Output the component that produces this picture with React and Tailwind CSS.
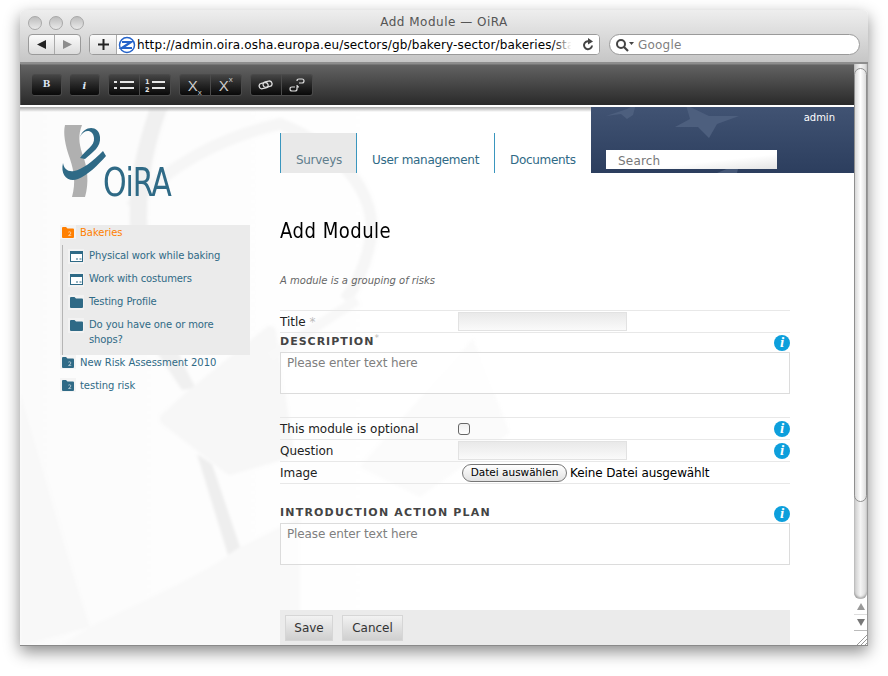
import React from 'react';

const FONT = { ui: 'font-["DejaVu_Sans",sans-serif]' };

function Light() {
  return <span className="block w-[14px] h-[14px] rounded-full border border-[#a8a8a8] bg-gradient-to-b from-[#bdbdbd] to-[#e9e9e9]" />;
}

function ToolButton({ children, left, right }) {
  const round = `${left ? 'rounded-l-[3px]' : ''} ${right ? 'rounded-r-[3px] border-l-0' : ''}`;
  return (
    <span className={`flex items-center justify-center h-[22px] border border-[#4a4a4a] bg-gradient-to-b from-[#454545] to-[#090909] text-white ${round}`}>
      {children}
    </span>
  );
}

function Folder({ color = '#2f6a86' }) {
  return (
    <span className="flex items-center justify-center w-[16px] h-[14px] shrink-0 bg-[#f4f4f4]">
      <svg width="12" height="11" viewBox="0 0 12 11">
        <path d="M0 1Q0 0 1 0H4L5.500 1.500H11Q12 1.500 12 2.500V10Q12 11 11 11H1Q0 11 0 10Z" fill={color} />
        <text x="6" y="9" fontSize="6" fill="#fff" opacity="0.8" fontFamily="DejaVu Sans">2</text>
      </svg>
    </span>
  );
}

function WindowIcon() {
  return (
    <svg width="13" height="11" viewBox="0 0 13 11" className="shrink-0">
      <rect x=".5" y=".5" width="12" height="10" fill="#fff" stroke="#2f6a86" />
      <rect x="0" y="0" width="13" height="3" fill="#2f6a86" />
      <path d="M6 8h2M9.500 8h2" stroke="#2f6a86" />
    </svg>
  );
}

function FullFolder() {
  return (
    <svg width="13" height="11" viewBox="0 0 13 11" className="shrink-0">
      <path d="M0 1Q0 0 1 0H4.500L6 1.500H12Q13 1.500 13 2.500V10Q13 11 12 11H1Q0 11 0 10Z" fill="#2f6a86" />
    </svg>
  );
}

function Info() {
  return (
    <span className="flex items-center justify-center w-4 h-4 rounded-full bg-[#0d9fdc] text-white font-['Liberation_Serif',serif] italic font-bold text-[15px] leading-none">
      i
    </span>
  );
}

function FieldRow({ label, children, info, star }) {
  return (
    <div className="flex items-center h-[22px] border-b border-[#e8e8e8]">
      <span className="w-[178px] text-[12px] text-[#222] tracking-[-0.03px]">
        {label}
        {star && <span className="text-[#bbb] ml-[4px]">*</span>}
      </span>
      <div className="flex-1 flex items-center">{children}</div>
      {info && <Info />}
    </div>
  );
}

function TextInput() {
  return <span className="block w-[169px] h-[19px] border border-[#e2e2e2] bg-gradient-to-b from-[#e9e9e9] to-[#fafafa]" />;
}

function TextBox() {
  return (
    <div className="h-[42px] border border-[#dcdcdc] bg-white/70 pl-[6px] pt-[1px] text-[12px] text-[#808080] tracking-[-0.12px]">
      Please enter text here
    </div>
  );
}

function SideItem({ icon, children }) {
  return (
    <div className="flex gap-[5px] text-[10px] leading-[15px] tracking-[-0.12px] text-[#2f6a86]">
      <span className="flex justify-center items-center w-[16px] h-[15px] mt-[1px] shrink-0 bg-[#f2f2f2]">{icon}</span>
      <span>{children}</span>
    </div>
  );
}

function Watermark() {
  return (
    <svg className="absolute inset-0 pointer-events-none blur-[1.5px]" width="834" height="539" viewBox="0 0 834 539">
      <defs>
        <linearGradient id="wash" x1="0" x2="1" y1="0" y2="0">
          <stop offset="0" stopColor="#fbfbfb" />
          <stop offset="1" stopColor="#ffffff" />
        </linearGradient>
      </defs>
      <rect width="420" height="539" fill="url(#wash)" />
      <path d="M0 285C25 370 50 460 70 520L0 539Z" fill="#f8f8f8" />
      <path d="M70 520C130 490 180 470 220 440L280 410V539H40Z" fill="#f9f9f9" />
      <path d="M110 100C147 60 200 30 260 17C320 40 360 90 350 135C345 160 335 180 325 193" fill="none" stroke="#f6f6f6" strokeWidth="12" />
      <path d="M130 0C115 45 108 80 110 120C112 175 125 225 140 250L162 283L176 281C150 235 127 170 127 110C127 70 135 35 148 0Z" fill="#f0f0f0" />
      <path d="M177 347L208 448L220 440L192 357Z" fill="#eeeeee" />
      <path d="M146 312L170 290L250 225L268 345L210 362Z" fill="#f7f7f7" stroke="#f7f7f7" strokeWidth="12" strokeLinejoin="round" />
      <path d="M453 231L490 326L400 390L340 360Z" fill="#fbfbfb" />
      <path d="M337 193L250 250" stroke="#f8f8f8" strokeWidth="10" />
    </svg>
  );
}

function Logo() {
  return (
    <div className="relative w-[115px] h-[78px]">
      <svg width="115" height="78" viewBox="0 0 115 78" className="absolute left-0 top-0">
        <path d="M5 2L22 2C18 12 19 20 22 30C28 45 29 60 25 74L12 74C16 60 14 48 10 36C5 22 3 10 5 2Z" fill="#b0b0b0" />
        <path d="M3 40C0 52 8 60 18 56C28 52 38 42 46 33L43 28C33 38 22 47 14 48C8 49 4 46 3 40Z" fill="#2f6a86" />
        <path d="M20 14C24 6 33 6 34 15C35 23 25 27 20 35L25 36C33 29 41 24 40 14C39 2 24 2 20 14Z" fill="#2f6a86" />
      </svg>
      <span className="absolute left-[43px] top-[40px] origin-left scale-x-[0.77] text-[39px] leading-[39px] text-[#2f6a86] tracking-[-1.5px]">OiRA</span>
    </div>
  );
}

export default function App() {
  return (
    <div className={`w-[888px] h-[676px] bg-white overflow-hidden pt-[10px] pl-[20px] ${FONT.ui}`}>
      <div className="w-[848px] h-[636px] flex flex-col rounded-t-[5px] bg-white shadow-[0_6px_16px_rgba(0,0,0,0.45)] border-b border-[#8a8a8a]">
        {/* browser chrome */}
        <div className="h-[54px] shrink-0 rounded-t-[5px] bg-gradient-to-b from-[#eeeeee] to-[#c6c6c6] border-b-2 border-[#8e8e8e]">
          <div className="relative h-[24px] flex items-center gap-[7px] pl-[8px] pt-[1px]">
            <Light />
            <Light />
            <Light />
            <span className="absolute inset-x-0 top-[3px] text-center text-[12px] text-[#555] tracking-[0.5px]">Add Module — OiRA</span>
          </div>
          <div className="flex items-center h-[21px] pl-[8px]">
            <div className="flex w-[53px] h-[21px] border border-[#9a9a9a] rounded-[4px] bg-gradient-to-b from-[#fbfbfb] to-[#dcdcdc]">
              <span className="flex-1 flex items-center justify-center border-r border-[#aaa]">
                <svg width="9" height="9" viewBox="0 0 9 9"><path d="M0 4.500L9 0V9Z" fill="#222" /></svg>
              </span>
              <span className="flex-1 flex items-center justify-center">
                <svg width="9" height="9" viewBox="0 0 9 9"><path d="M9 4.500L0 0V9Z" fill="#8d8d8d" /></svg>
              </span>
            </div>
            <div className="flex w-[511px] h-[21px] ml-[8px] border border-[#9a9a9a] rounded-[4px] overflow-hidden bg-white">
              <span className="flex items-center justify-center w-[27px] border-r border-[#aaa] bg-gradient-to-b from-[#fbfbfb] to-[#dcdcdc]">
                <svg width="11" height="11" viewBox="0 0 11 11"><path d="M5.500 0V11M0 5.500H11" stroke="#222" strokeWidth="2" /></svg>
              </span>
              <svg width="18" height="18" viewBox="0 0 18 18" className="ml-[1px] mt-[1px] shrink-0">
                <circle cx="9" cy="9" r="7.500" fill="#fff" stroke="#2563c9" strokeWidth="1.500" />
                <path d="M4 6H13L4 12H14" fill="none" stroke="#2563c9" strokeWidth="2.200" />
              </svg>
              <span className="relative flex-1 flex items-center overflow-hidden whitespace-nowrap text-[12px] text-black tracking-[0.13px] pl-[1px]">
                http://admin.oira.osha.europa.eu/sectors/gb/bakery-sector/bakeries/start
                <span className="absolute right-0 top-0 bottom-0 w-[46px] bg-gradient-to-r from-transparent to-white to-40%" />
                <svg width="14" height="14" viewBox="0 0 14 14" className="absolute right-[4px] top-[3px]">
                  <path d="M11 7.500A4 4 0 1 1 8 3.300" fill="none" stroke="#444" strokeWidth="2" />
                  <path d="M7 0L12 3.500L7 6.500Z" fill="#444" />
                </svg>
              </span>
            </div>
            <div className="flex items-center w-[251px] h-[21px] ml-[9px] border border-[#9a9a9a] rounded-full bg-white pl-[5px] text-[12px] text-[#808080]">
              <svg width="20" height="14" viewBox="0 0 20 14" className="shrink-0">
                <circle cx="6" cy="6" r="4" fill="none" stroke="#444" strokeWidth="2" />
                <path d="M9 9L13 13" stroke="#444" strokeWidth="2.200" />
                <path d="M14 4H19L16.500 7Z" fill="#444" />
              </svg>
              <span className="ml-[3px] pt-[1px] tracking-[0.2px]">Google</span>
            </div>
          </div>
        </div>

        <div className="flex flex-1 min-h-0">
          <div className="w-[834px] flex flex-col min-h-0">
            {/* editor toolbar */}
            <div className="h-[41px] shrink-0 flex items-center gap-[8px] pl-[11px] bg-gradient-to-b from-[#636363] to-[#2a2a2a] border-t border-[#777] border-l border-l-[#555]">
              <span className="w-[30px]"><ToolButton left right><b className="text-[9px] font-['DejaVu_Serif',serif] text-[#dde6f5]">B</b></ToolButton></span>
              <span className="w-[30px]"><ToolButton left right><i className="text-[10px] font-bold font-['DejaVu_Serif',serif] text-[#dde6f5]">i</i></ToolButton></span>
              <span className="grid grid-cols-2 w-[63px]">
                <ToolButton left>
                  <svg width="20" height="10" viewBox="0 0 20 10"><path d="M0 2H3M6 2H20M0 8H3M6 8H20" stroke="#e6e6e6" strokeWidth="2" /></svg>
                </ToolButton>
                <ToolButton right>
                  <svg width="20" height="14" viewBox="0 0 20 14">
                    <path d="M7 4H20M7 10H20" stroke="#e6e6e6" strokeWidth="2" />
                    <text x="0" y="6" fontSize="6.500" fontWeight="bold" fill="#e6e6e6">1</text>
                    <text x="0" y="13.500" fontSize="6.500" fontWeight="bold" fill="#e6e6e6">2</text>
                  </svg>
                </ToolButton>
              </span>
              <span className="grid grid-cols-2 w-[63px] font-['Liberation_Sans',sans-serif]">
                <ToolButton left><span className="text-[15px] text-[#ccc] leading-none">X<sub className="text-[8px] align-[-2px]">x</sub></span></ToolButton>
                <ToolButton right><span className="text-[15px] text-[#ccc] leading-none">X<sup className="text-[8px] align-[5px]">x</sup></span></ToolButton>
              </span>
              <span className="grid grid-cols-2 w-[63px]">
                <ToolButton left>
                  <svg width="15" height="10" viewBox="0 0 15 10"><rect x="1" y="3" width="9" height="5.500" rx="2.700" transform="rotate(-12 5 5)" fill="none" stroke="#ddd" strokeWidth="1.300" /><rect x="5" y="1.500" width="9" height="5.500" rx="2.700" transform="rotate(-12 9 4)" fill="none" stroke="#ddd" strokeWidth="1.300" /></svg>
                </ToolButton>
                <ToolButton right>
                  <svg width="16" height="14" viewBox="0 0 16 14"><path d="M6 9H3Q1 9 1 11T3 13H6Q8 13 8 11V9H10Q8 9 8 7M8 3Q8 1 10 1H13Q15 1 15 3T13 5H10" fill="none" stroke="#ddd" strokeWidth="1.200" /></svg>
                </ToolButton>
              </span>
            </div>
            <div className="h-[2px] shrink-0 bg-white" />

            {/* page */}
            <div className="relative flex flex-1 min-h-0 overflow-hidden bg-white">
              <Watermark />
              <div className="absolute left-0 top-0 w-[571px] h-[5px] bg-gradient-to-b from-[#a8a8a8] to-transparent" />
              <aside className="relative w-[260px] shrink-0 pl-[40px] pt-[16px]">
                <Logo />
                <div className="w-[190px] mt-[24px] bg-[#ebebeb]">
                  <div className="flex items-center gap-[4px] h-[14px] text-[10px] tracking-[-0.05px] text-[#ff7f00]">
                    <Folder color="#ff7f00" />
                    Bakeries
                  </div>
                  <div className="ml-[2px] mt-[6px] border-l border-[#b5b5b5] pl-[5px] pt-[3px] pb-[8px] flex flex-col gap-[7px]">
                    <SideItem icon={<WindowIcon />}>Physical work while baking</SideItem>
                    <SideItem icon={<WindowIcon />}>Work with costumers</SideItem>
                    <SideItem icon={<FullFolder />}>Testing Profile</SideItem>
                    <SideItem icon={<FullFolder />}>Do you have one or more shops?</SideItem>
                  </div>
                </div>
                <div className="flex items-center gap-[4px] h-[14px] text-[10px] tracking-[-0.05px] text-[#2f6a86]">
                  <Folder />
                  New Risk Assessment 2010
                </div>
                <div className="flex items-center gap-[4px] mt-[9px] h-[14px] text-[10px] tracking-[-0.05px] text-[#2f6a86]">
                  <Folder />
                  testing risk
                </div>
              </aside>

              <main className="relative flex-1 min-w-0">
                <div className="flex h-[66px]">
                  <nav className="flex self-end h-[40px] text-[12px] tracking-[-0.3px] text-[#2f6a86]">
                    <span className="w-[77px] pl-[15px] pt-[18px] bg-[#e9e9e9] border-l border-r border-[#3a96be] text-[#5f7d8c]">Surveys</span>
                    <span className="w-[138px] pl-[15px] pt-[18px] border-r border-[#3a96be]">User management</span>
                    <span className="w-[96px] pl-[15px] pt-[18px]">Documents</span>
                  </nav>
                  <div className="relative flex-1 overflow-hidden bg-gradient-to-b from-[#415373] to-[#2c3e5e] pl-[15px] pt-[43px]">
                    <svg className="absolute inset-0" width="263" height="66" viewBox="0 0 263 66">
                      <path d="M15 9L36 2L45 -3L42 8L36 12L30 7Z" fill="#4d5f7e" />
                      <path d="M95 -2L118 9L148 9L126 17L118 31L107 20L84 20L99 12Z" fill="#4d5f7e" />
                      <path d="M126 66L145 58L150 50L146 66Z" fill="#465877" />
                    </svg>
                    <span className="absolute right-[19px] top-[3px] text-[10px] font-medium text-white">admin</span>
                    <span className="relative block w-[171px] h-[19px] pl-[12px] text-[12px] leading-[23px] text-[#777] tracking-[0.2px] bg-gradient-to-br from-white from-60% to-[#e4e4e4]">Search</span>
                  </div>
                </div>

                <div className="w-[510px] text-[#222]">
                  <h1 className="mt-[44px] origin-left scale-x-[0.82] text-[22px] leading-[28px] text-black tracking-[0.6px]">Add Module</h1>
                  <p className="mt-[29px] text-[10px] leading-[14px] italic text-[#666] tracking-[0px]">A module is a grouping of risks</p>

                  <div className="mt-[22px] border-t border-[#e8e8e8]">
                    <FieldRow label="Title" star><TextInput /></FieldRow>
                  </div>
                  <div className="flex items-center justify-between h-[19px]">
                    <span className="text-[11px] font-bold tracking-[1px] text-[#444]">DESCRIPTION<sup className="text-[#bbb] font-normal text-[9px] tracking-normal">*</sup></span>
                    <Info />
                  </div>
                  <TextBox />

                  <div className="mt-[23px] border-t border-[#e8e8e8]">
                    <FieldRow label="This module is optional" info>
                      <span className="block w-[12px] h-[12px] rounded-[3px] border border-[#666] bg-gradient-to-b from-[#eee] to-white" />
                    </FieldRow>
                  </div>
                  <FieldRow label="Question" info><TextInput /></FieldRow>
                  <FieldRow label="Image">
                    <span className="flex items-center justify-center w-[105px] h-[18px] ml-[4px] rounded-full border border-[#777] bg-gradient-to-b from-white to-[#e2e2e2] text-[10.5px] text-black">Datei auswählen</span>
                    <span className="ml-[3px] text-[12px] tracking-[-0.1px] text-black">Keine Datei ausgewählt</span>
                  </FieldRow>

                  <div className="flex items-center justify-between h-[19px] mt-[20px]">
                    <span className="text-[11px] font-bold tracking-[1.2px] text-[#444]">INTRODUCTION ACTION PLAN</span>
                    <Info />
                  </div>
                  <TextBox />

                  <div className="flex items-center gap-[9px] h-[36px] mt-[45px] pl-[5px] bg-[#ebebeb]">
                    <span className="flex items-center justify-center w-[48px] h-[26px] border border-[#d6d6d6] bg-gradient-to-b from-[#f2f2f2] to-[#cfcfcf] text-[12px] text-[#333]">Save</span>
                    <span className="flex items-center justify-center w-[61px] h-[26px] border border-[#d6d6d6] bg-gradient-to-b from-[#f2f2f2] to-[#cfcfcf] text-[12px] text-[#333]">Cancel</span>
                  </div>
                </div>
              </main>
            </div>
          </div>

          {/* scrollbar */}
          <div className="w-[14px] shrink-0 flex flex-col bg-white border-r border-[#9a9a9a]">
            <div className="flex-1 min-h-0 pt-[4px] rounded-b-[6px] bg-gradient-to-r from-[#c9c9c9] via-[#f4f4f4] to-[#d6d6d6] shadow-[inset_0_-2px_2px_rgba(0,0,0,0.25)]">
              <div className="h-[434px] rounded-full border border-[#8f8f8f] bg-gradient-to-r from-[#d8d8d8] via-white to-[#dddddd]" />
            </div>
            <div className="h-[16px] flex items-center justify-center border-b border-[#ddd]">
              <svg width="8" height="7" viewBox="0 0 8 7"><path d="M4 0L8 7H0Z" fill="#999" /></svg>
            </div>
            <div className="h-[16px] flex items-center justify-center border-b border-[#bbb]">
              <svg width="8" height="7" viewBox="0 0 8 7"><path d="M4 7L8 0H0Z" fill="#777" /></svg>
            </div>
            <div className="h-[14px] flex items-end justify-end">
              <svg width="12" height="12" viewBox="0 0 12 12"><path d="M2 12L12 2M6 12L12 6M10 12L12 10" stroke="#999" /></svg>
            </div>
          </div>
        </div>
      </div>
    </div>
  );
}
